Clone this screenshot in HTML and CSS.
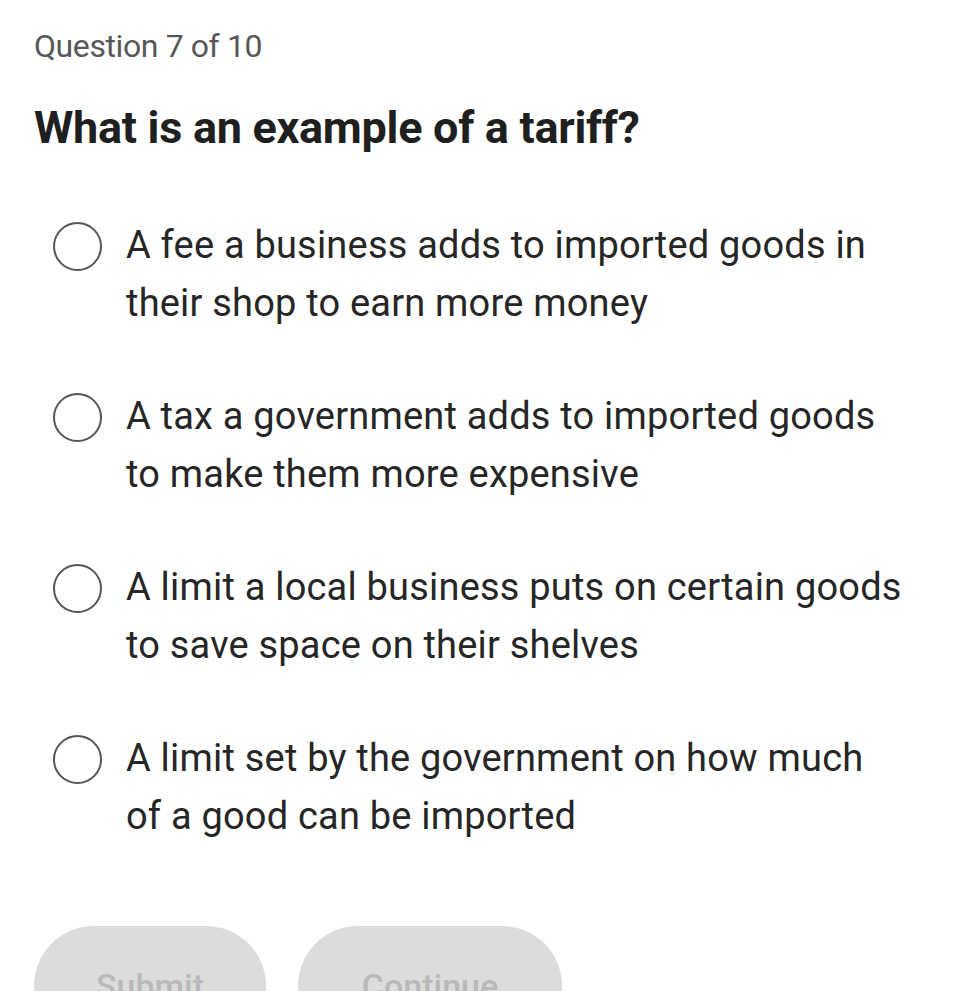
FILE: index.html
```html
<!DOCTYPE html>
<html>
<head>
<meta charset="utf-8">
<link rel="stylesheet" href="styles.css">
</head>
<body>
<main class="quiz">
  <div class="counter">Question 7 of 10</div>
  <h1 class="question">What is an example of a tariff?</h1>
  <ul class="options">
    <li class="option"><span class="radio"></span><span class="label">A fee a business adds to imported goods in their shop to earn more money</span></li>
    <li class="option"><span class="radio"></span><span class="label">A tax a government adds to imported goods to make them more expensive</span></li>
    <li class="option"><span class="radio"></span><span class="label">A limit a local business puts on certain goods to save space on their shelves</span></li>
    <li class="option"><span class="radio"></span><span class="label">A limit set by the government on how much of a good can be imported</span></li>
  </ul>
  <div class="actions">
    <button class="btn btn-submit">Submit</button>
    <button class="btn btn-continue">Continue</button>
  </div>
</main>
</body>
</html>
```

FILE: styles.css
```css
html, body {
  margin: 0;
  padding: 0;
  background: #ffffff;
  overflow: hidden;
}
body {
  font-family: Roboto, "Liberation Sans", sans-serif;
  color: #222;
}
.quiz {
  padding: 26px 0 0 34px;
}
.counter {
  font-size: 32px;
  color: #575757;
  line-height: 40px;
  letter-spacing: -0.4px;
}
.question {
  margin: 34px 0 0 0;
  font-size: 45px;
  font-weight: 700;
  line-height: 56px;
  color: #1f1f1f;
  letter-spacing: -0.3px;
}
.options {
  list-style: none;
  margin: 67px 0 0 0;
  padding: 0;
  display: flex;
  flex-direction: column;
  gap: 62px;
}
.option {
  display: flex;
  align-items: flex-start;
  gap: 24px;
  padding-left: 19px;
}
.radio {
  flex: none;
  width: 45px;
  height: 45px;
  border: 2.5px solid #555;
  border-radius: 50%;
  margin-top: -1px;
}
.label {
  font-size: 38px;
  line-height: 58px;
  letter-spacing: 0.2px;
  color: #262626;
  max-width: 776px;
  margin-top: -7px;
}
.actions {
  display: flex;
  gap: 32px;
  margin-top: 81px;
}
.btn {
  border: none;
  background: #dcdcdc;
  color: #b9b9b9;
  font-family: Roboto, "Liberation Sans", sans-serif;
  font-size: 34px;
  font-weight: 500;
  height: 120px;
  border-radius: 60px;
  padding: 0;
}
.btn-submit { width: 232px; }
.btn-continue { width: 264px; }
```
